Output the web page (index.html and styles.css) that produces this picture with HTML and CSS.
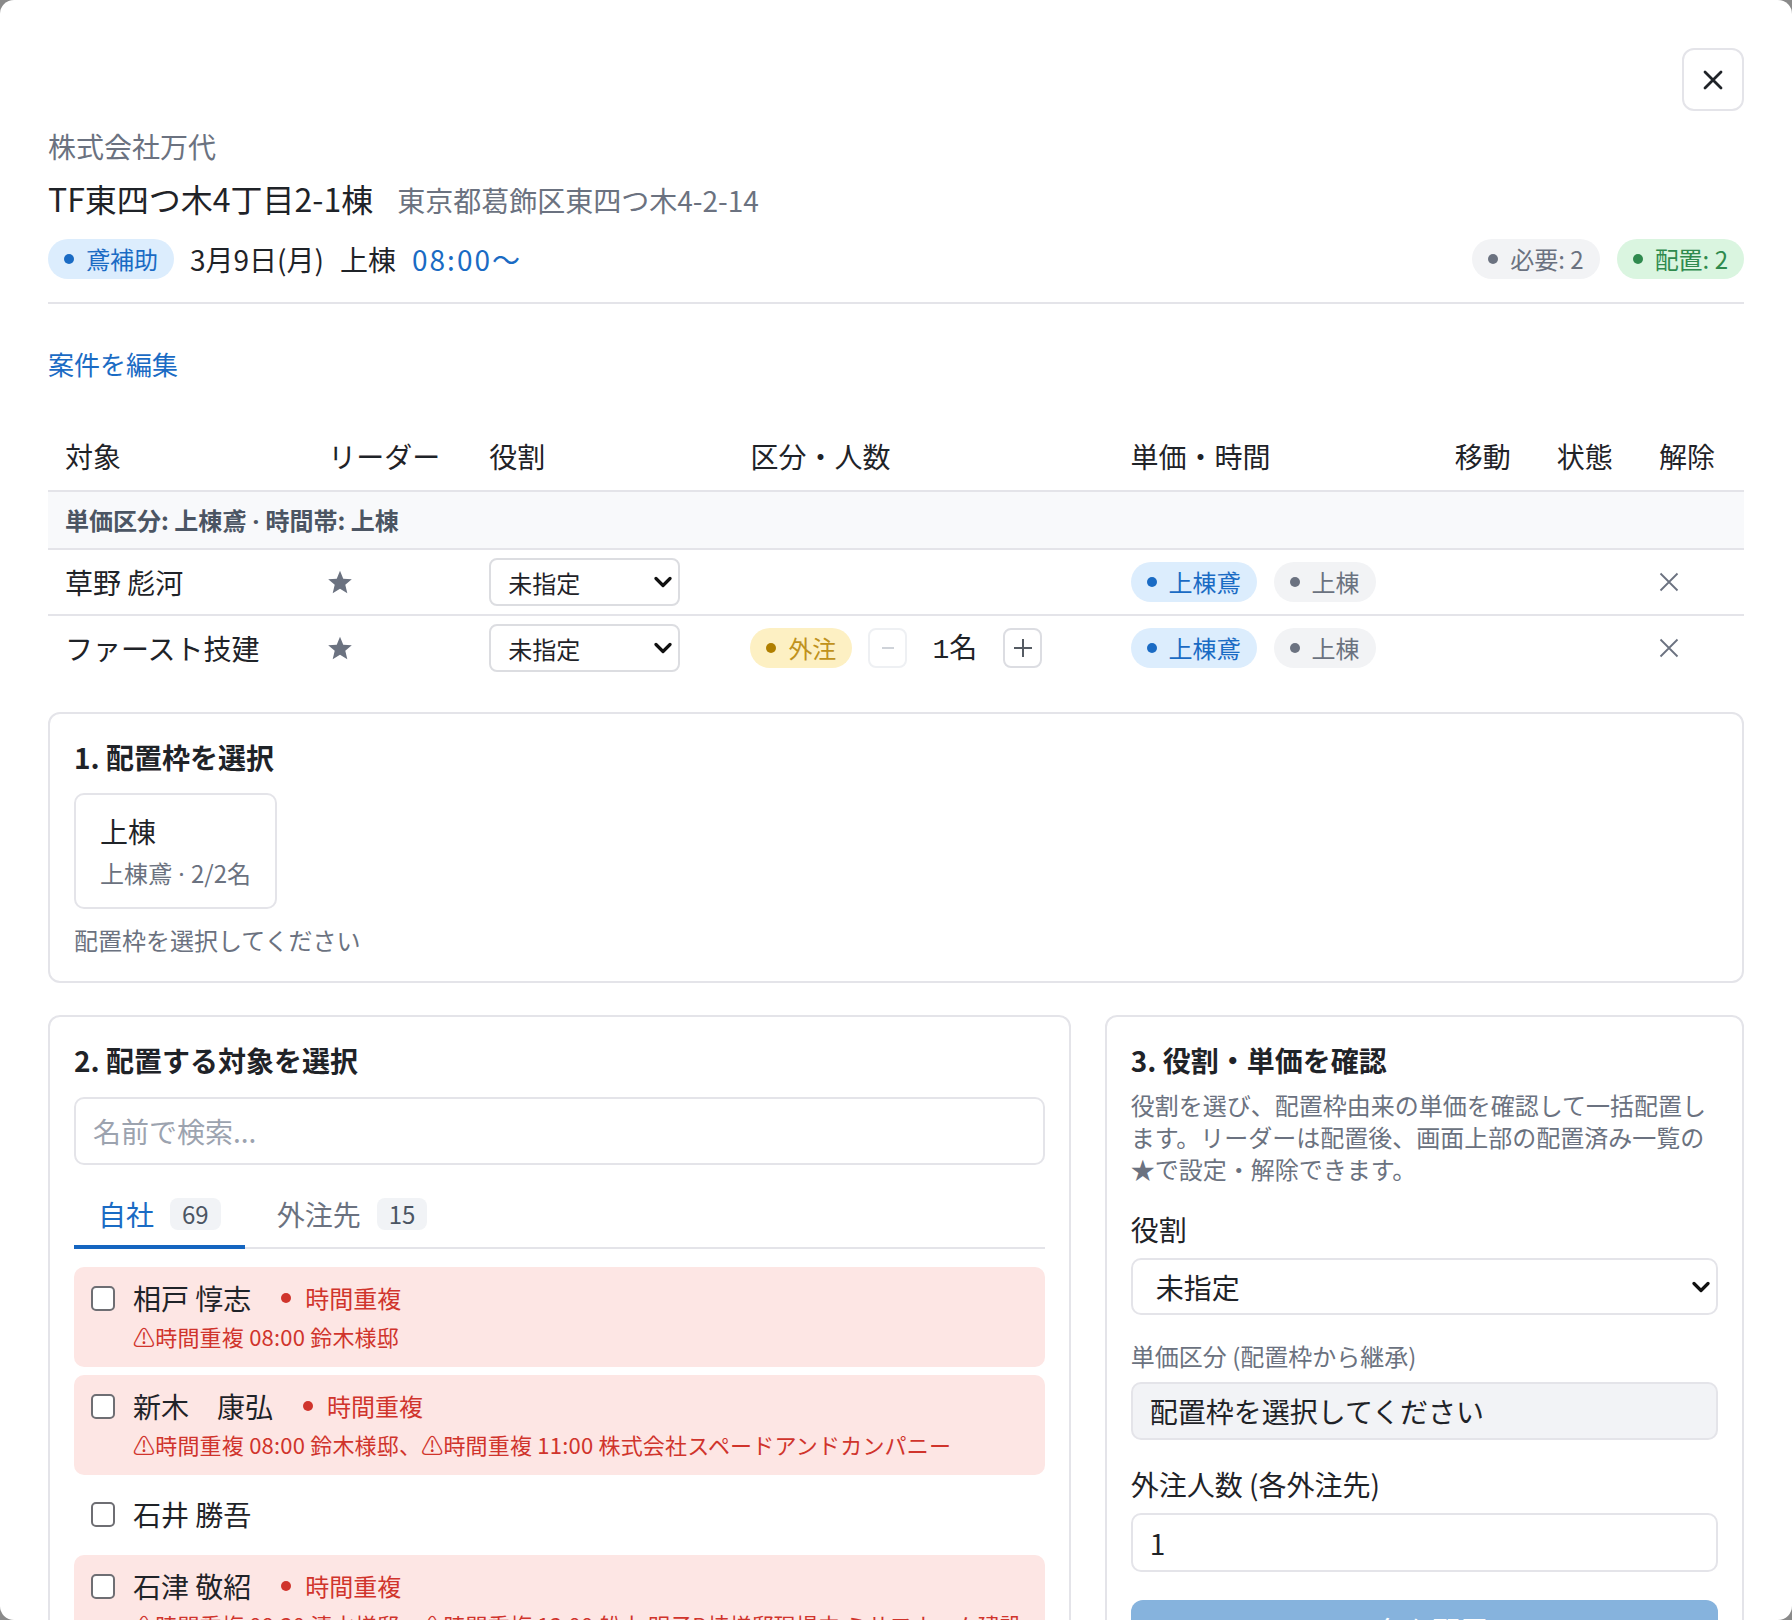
FILE: index.html
```html
<!DOCTYPE html>
<html lang="ja">
<head>
    <meta charset="UTF-8">
    <meta name="viewport" content="width=device-width, initial-scale=1.0">
    <title>配置 - TF東四つ木4丁目2-1棟</title>
    <link rel="stylesheet" href="styles.css">
</head>
<body>
    <div class="modal">
        <div class="modal-top">
            <button class="close-btn" aria-label="閉じる">
                <svg width="20" height="20" viewBox="0 0 20 20"><path d="M2 2L18 18M18 2L2 18" /></svg>
            </button>
        </div>

        <div class="company">株式会社万代</div>
        <div class="title-row">
            <h1>TF東四つ木4丁目2-1棟</h1>
            <span class="address">東京都葛飾区東四つ木4-2-14</span>
        </div>
        <div class="meta-row">
            <span class="pill pill-blue"><i class="dot"></i>鳶補助</span>
            <span>3月9日(月)</span>
            <span>上棟</span>
            <span class="time">08:00〜</span>
            <div class="counts">
                <span class="pill pill-gray"><i class="dot"></i>必要: 2</span>
                <span class="pill pill-green"><i class="dot"></i>配置: 2</span>
            </div>
        </div>

        <a href="#" class="edit-link">案件を編集</a>

        <table class="assign-table">
            <colgroup>
                <col class="c-name">
                <col class="c-leader">
                <col class="c-role">
                <col class="c-qty">
                <col class="c-rate">
                <col class="c-small">
                <col class="c-small">
                <col class="c-small">
            </colgroup>
            <thead>
                <tr>
                    <th>対象</th>
                    <th>リーダー</th>
                    <th>役割</th>
                    <th>区分・人数</th>
                    <th>単価・時間</th>
                    <th>移動</th>
                    <th>状態</th>
                    <th>解除</th>
                </tr>
            </thead>
            <tbody>
                <tr class="group-row">
                    <td colspan="8">単価区分: 上棟鳶<span class="mid"> · </span>時間帯: 上棟</td>
                </tr>
                <tr>
                    <td>草野 彪河</td>
                    <td>
                        <svg class="star" width="28" height="27" viewBox="0 0 24 24"><polygon points="12,1.5 14.9,8.6 22.5,9.2 16.7,14.1 18.5,21.6 12,17.6 5.5,21.6 7.3,14.1 1.5,9.2 9.1,8.6" /></svg>
                    </td>
                    <td>
                        <div class="select-wrap">
                            <select><option>未指定</option></select>
                            <svg class="chevron" width="18" height="12" viewBox="0 0 18 12"><path d="M2 2.5L9 9.5L16 2.5" /></svg>
                        </div>
                    </td>
                    <td></td>
                    <td>
                        <div class="rate-pills">
                            <span class="pill pill-blue"><i class="dot"></i>上棟鳶</span>
                            <span class="pill pill-gray"><i class="dot"></i>上棟</span>
                        </div>
                    </td>
                    <td></td>
                    <td></td>
                    <td>
                        <button class="remove-btn" aria-label="解除">
                            <svg width="20" height="20" viewBox="0 0 20 20"><path d="M1.5 1.5L18.5 18.5M18.5 1.5L1.5 18.5" /></svg>
                        </button>
                    </td>
                </tr>
                <tr>
                    <td>ファースト技建</td>
                    <td>
                        <svg class="star" width="28" height="27" viewBox="0 0 24 24"><polygon points="12,1.5 14.9,8.6 22.5,9.2 16.7,14.1 18.5,21.6 12,17.6 5.5,21.6 7.3,14.1 1.5,9.2 9.1,8.6" /></svg>
                    </td>
                    <td>
                        <div class="select-wrap">
                            <select><option>未指定</option></select>
                            <svg class="chevron" width="18" height="12" viewBox="0 0 18 12"><path d="M2 2.5L9 9.5L16 2.5" /></svg>
                        </div>
                    </td>
                    <td>
                        <div class="qty">
                            <span class="pill pill-yellow"><i class="dot"></i>外注</span>
                            <button class="step-btn" disabled>
                                <svg width="14" height="14" viewBox="0 0 14 14"><path d="M1 7H13" /></svg>
                            </button>
                            <span class="qty-num"><span class="num">1</span>名</span>
                            <button class="step-btn">
                                <svg width="20" height="20" viewBox="0 0 20 20"><path d="M10 1V19M1 10H19" /></svg>
                            </button>
                        </div>
                    </td>
                    <td>
                        <div class="rate-pills">
                            <span class="pill pill-blue"><i class="dot"></i>上棟鳶</span>
                            <span class="pill pill-gray"><i class="dot"></i>上棟</span>
                        </div>
                    </td>
                    <td></td>
                    <td></td>
                    <td>
                        <button class="remove-btn" aria-label="解除">
                            <svg width="20" height="20" viewBox="0 0 20 20"><path d="M1.5 1.5L18.5 18.5M18.5 1.5L1.5 18.5" /></svg>
                        </button>
                    </td>
                </tr>
            </tbody>
        </table>

        <div class="panel slot-panel">
            <h2>1. 配置枠を選択</h2>
            <div class="slot-card">
                <div class="slot-name">上棟</div>
                <div class="slot-sub">上棟鳶<span class="mid"> · </span>2/2名</div>
            </div>
            <div class="hint">配置枠を選択してください</div>
        </div>

        <div class="lower">
            <div class="panel">
                <h2>2. 配置する対象を選択</h2>
                <input type="text" class="search" placeholder="名前で検索...">

                <div class="tabs">
                    <button class="tab active">自社<span class="tab-count">69</span></button>
                    <button class="tab">外注先<span class="tab-count">15</span></button>
                </div>

                <ul class="people">
                    <li class="person conflict">
                        <div class="person-line">
                            <input type="checkbox">
                            <span>相戸 惇志</span>
                            <span class="conflict-tag"><i class="dot"></i>時間重複</span>
                        </div>
                        <div class="conflict-note">⚠時間重複 08:00 鈴木様邸</div>
                    </li>
                    <li class="person conflict">
                        <div class="person-line">
                            <input type="checkbox">
                            <span>新木　康弘</span>
                            <span class="conflict-tag"><i class="dot"></i>時間重複</span>
                        </div>
                        <div class="conflict-note">⚠時間重複 08:00 鈴木様邸、⚠時間重複 11:00 株式会社スペードアンドカンパニー</div>
                    </li>
                    <li class="person">
                        <div class="person-line">
                            <input type="checkbox">
                            <span>石井 勝吾</span>
                        </div>
                    </li>
                    <li class="person conflict">
                        <div class="person-line">
                            <input type="checkbox">
                            <span>石津 敬紹</span>
                            <span class="conflict-tag"><i class="dot"></i>時間重複</span>
                        </div>
                        <div class="conflict-note">⚠時間重複 08:30 清水様邸、⚠時間重複 13:00 船木 明子B棟様邸現場中 ミサワホーム建設</div>
                    </li>
                </ul>
            </div>

            <div class="panel">
                <h2>3. 役割・単価を確認</h2>
                <p class="desc">役割を選び、配置枠由来の単価を確認して一括配置します。リーダーは配置後、画面上部の配置済み一覧の★で設定・解除できます。</p>

                <div class="field">
                    <label class="field-label">役割</label>
                    <div class="select-wrap large">
                        <select><option>未指定</option></select>
                        <svg class="chevron" width="18" height="12" viewBox="0 0 18 12"><path d="M2 2.5L9 9.5L16 2.5" /></svg>
                    </div>
                </div>

                <div class="field">
                    <label class="field-label muted">単価区分 (配置枠から継承)</label>
                    <div class="readonly">配置枠を選択してください</div>
                </div>

                <div class="field">
                    <label class="field-label">外注人数 (各外注先)</label>
                    <input type="number" class="number-input" value="1">
                </div>

                <button class="submit-btn" disabled>0名を配置</button>
            </div>
        </div>
    </div>
</body>
</html>
```

FILE: styles.css
```css
* {
    margin: 0;
    padding: 0;
    box-sizing: border-box;
}

body {
    font-family: "Noto Sans CJK JP", "Noto Sans", sans-serif;
    color: #1f2328;
    background-color: #8a8a8a;
}

.modal {
    height: 100vh;
    overflow: hidden;
    background: white;
    border-radius: 14px;
    padding: 48px;
}

.modal-top {
    display: flex;
    justify-content: flex-end;
}

.close-btn {
    width: 62px;
    height: 63px;
    border: 2px solid #e4e4e9;
    border-radius: 12px;
    background: white;
    display: flex;
    align-items: center;
    justify-content: center;
}

.close-btn path {
    stroke: #1f2328;
    stroke-width: 2.8;
    stroke-linecap: round;
    fill: none;
}

.company {
    margin-top: 15px;
    font-size: 28px;
    line-height: 40px;
    color: #6b7280;
}

.title-row {
    margin-top: 10px;
    display: flex;
    align-items: baseline;
    gap: 24px;
}

.title-row h1 {
    font-size: 32px;
    font-weight: 400;
    line-height: 44px;
}

.address {
    font-size: 28px;
    color: #6b7280;
}

.meta-row {
    margin-top: 19px;
    display: flex;
    align-items: center;
    gap: 16px;
    font-size: 28px;
    line-height: 40px;
    padding-bottom: 23px;
    border-bottom: 2px solid #e4e4e9;
}

.time {
    color: #1a6bc4;
    letter-spacing: 2px;
}

.counts {
    margin-left: auto;
    display: flex;
    gap: 17px;
}

.pill {
    display: inline-flex;
    align-items: center;
    gap: 12px;
    height: 40px;
    padding: 0 16px;
    border-radius: 20px;
    font-size: 24px;
    line-height: 32px;
    white-space: nowrap;
}

.dot {
    display: inline-block;
    width: 10px;
    height: 10px;
    border-radius: 50%;
    background: currentColor;
}

.pill-blue {
    background: #dcedfd;
    color: #1a6bc4;
}

.pill-gray {
    background: #f2f3f5;
    color: #6b7280;
}

.pill-green {
    background: #daf5e0;
    color: #2f8a4e;
}

.pill-yellow {
    background: #fdf0c3;
    color: #c0921c;
}

.pill-yellow .dot {
    background: #b07f00;
}

.mid {
    font-family: "Noto Sans", sans-serif;
    line-height: 0;
}

.edit-link {
    display: block;
    width: fit-content;
    margin-top: 42px;
    font-size: 26px;
    line-height: 36px;
    color: #1a6bc4;
    text-decoration: none;
}

/* placed list */
.assign-table {
    width: 100%;
    margin-top: 38px;
    border-collapse: collapse;
    table-layout: fixed;
}

.c-name { width: 263px; }
.c-leader { width: 161px; }
.c-role { width: 261px; }
.c-qty { width: 380px; }
.c-rate { width: 324px; }
.c-small { width: 102px; }

.assign-table th {
    text-align: left;
    font-weight: 400;
    font-size: 28px;
    line-height: 40px;
    padding: 16px 17px 14px;
    border-bottom: 2px solid #e4e4e9;
    white-space: nowrap;
}

.assign-table td {
    padding: 8px 17px;
    font-size: 28px;
    line-height: 48px;
    border-bottom: 2px solid #e4e4e9;
    vertical-align: middle;
    white-space: nowrap;
}

.assign-table tr:last-child td {
    border-bottom: none;
}

.assign-table .group-row td {
    background: #f8f9fb;
    font-size: 24px;
    line-height: 34px;
    padding: 11px 17px;
    font-weight: 700;
    color: #4b5563;
}

.star {
    display: block;
    margin-left: -2px;
    fill: #6b7280;
}

.select-wrap {
    position: relative;
    display: flex;
    width: 191px;
}

.select-wrap select {
    appearance: none;
    width: 100%;
    height: 48px;
    border: 2px solid #dcdde1;
    border-radius: 8px;
    background: white;
    font-family: inherit;
    font-size: 24px;
    color: #1f2328;
    padding: 0 40px 0 17px;
}

.select-wrap .chevron {
    position: absolute;
    right: 8px;
    top: 50%;
    margin-top: -6px;
    pointer-events: none;
}

.chevron path {
    stroke: #111;
    stroke-width: 3.2;
    stroke-linecap: round;
    stroke-linejoin: round;
    fill: none;
}

.select-wrap.large {
    width: 100%;
}

.select-wrap.large select {
    height: 57px;
    font-size: 28px;
    padding: 0 48px 0 23px;
    border-color: #e4e4e9;
    border-radius: 10px;
}

.rate-pills {
    display: flex;
    gap: 17px;
}

.qty {
    display: flex;
    align-items: center;
}

.step-btn {
    width: 39px;
    height: 40px;
    margin-left: 16px;
    border: 2px solid #dcdde2;
    border-radius: 8px;
    background: white;
    display: flex;
    align-items: center;
    justify-content: center;
}

.step-btn path {
    stroke: #555b63;
    stroke-width: 2;
    fill: none;
}

.step-btn:disabled {
    border-color: #eef0f3;
}

.step-btn:disabled path {
    stroke: #cfd3d9;
}

.qty-num {
    margin: 0 10px 0 25px;
    font-size: 28px;
    line-height: 40px;
}

.qty-num .num {
    font-family: "Liberation Mono", monospace;
}

.remove-btn {
    display: block;
    border: none;
    background: none;
}

.remove-btn svg {
    display: block;
}

.remove-btn path {
    stroke: #6b7280;
    stroke-width: 1.8;
    fill: none;
}

/* panels */
.panel {
    border: 2px solid #e4e4e9;
    border-radius: 12px;
    padding: 24px;
    background: white;
}

.panel h2 {
    font-size: 28px;
    font-weight: 700;
    line-height: 38px;
}

.slot-panel {
    margin-top: 32px;
}

.slot-card {
    width: fit-content;
    margin-top: 17px;
    border: 2px solid #e4e4e9;
    border-radius: 10px;
    padding: 16px 24px 18px;
}

.slot-name {
    font-size: 28px;
    line-height: 40px;
}

.slot-sub {
    margin-top: 6px;
    font-size: 24px;
    line-height: 32px;
    color: #6b7280;
}

.hint {
    margin-top: 14px;
    font-size: 24px;
    line-height: 34px;
    color: #6b7280;
}

.lower {
    display: grid;
    grid-template-columns: 8fr 5fr;
    gap: 34px;
    margin-top: 32px;
    align-items: start;
}

.search {
    display: block;
    width: 100%;
    height: 68px;
    margin-top: 18px;
    border: 2px solid #e4e4e9;
    border-radius: 10px;
    padding: 0 17px;
    font-family: inherit;
    font-size: 28px;
    color: #1f2328;
}

.search::placeholder {
    color: #9ca3af;
}

.tabs {
    display: flex;
    gap: 8px;
    margin-top: 16px;
    border-bottom: 2px solid #e4e4e9;
}

.tab {
    display: flex;
    align-items: center;
    gap: 16px;
    padding: 16px 24px 14px;
    margin-bottom: -2px;
    background: none;
    border: none;
    border-bottom: 4px solid transparent;
    font-family: inherit;
    font-size: 28px;
    line-height: 34px;
    color: #6b7280;
}

.tab.active {
    color: #1a6bc4;
    border-bottom-color: #1565c0;
}

.tab-count {
    padding: 0 12px;
    border-radius: 8px;
    background: #f1f3f6;
    font-size: 24px;
    line-height: 32px;
    color: #4b5563;
}

.people {
    list-style: none;
    margin-top: 18px;
    display: flex;
    flex-direction: column;
    gap: 8px;
}

.person {
    padding: 13px 17px 15px;
    border-radius: 10px;
}

.person.conflict {
    background: #fde6e4;
}

.person-line {
    display: flex;
    align-items: center;
    gap: 18px;
    font-size: 28px;
    line-height: 36px;
}

.person-line input[type="checkbox"] {
    appearance: none;
    flex: none;
    width: 24px;
    height: 25px;
    border: 2px solid #6e6e73;
    border-radius: 5px;
    background: white;
}

.conflict-tag {
    display: flex;
    align-items: center;
    gap: 14px;
    padding: 0 12px;
    font-size: 24px;
    color: #d0342c;
}

.conflict-note {
    margin: 4px 0 0 42px;
    font-size: 22px;
    line-height: 32px;
    color: #d0342c;
    letter-spacing: 0.2px;
}

.desc {
    margin-top: 10px;
    font-size: 24px;
    line-height: 32px;
    color: #6b7280;
}

.field {
    margin-top: 24px;
}

.field-label {
    display: block;
    margin-bottom: 9px;
    font-size: 28px;
    line-height: 40px;
}

.field-label.muted {
    font-size: 24px;
    line-height: 34px;
    color: #6b7280;
}

.readonly {
    height: 58px;
    display: flex;
    align-items: center;
    padding: 0 17px;
    background: #f2f3f6;
    border: 2px solid #e4e4e9;
    border-radius: 10px;
    font-size: 28px;
}

.number-input {
    display: block;
    width: 100%;
    height: 59px;
    padding: 0 17px;
    border: 2px solid #e4e4e9;
    border-radius: 10px;
    font-family: inherit;
    font-size: 28px;
    color: #1f2328;
}

.submit-btn {
    display: block;
    width: 100%;
    height: 60px;
    margin-top: 28px;
    border: none;
    border-radius: 12px;
    background: #86b3dd;
    color: white;
    font-family: inherit;
    font-size: 28px;
}
```
